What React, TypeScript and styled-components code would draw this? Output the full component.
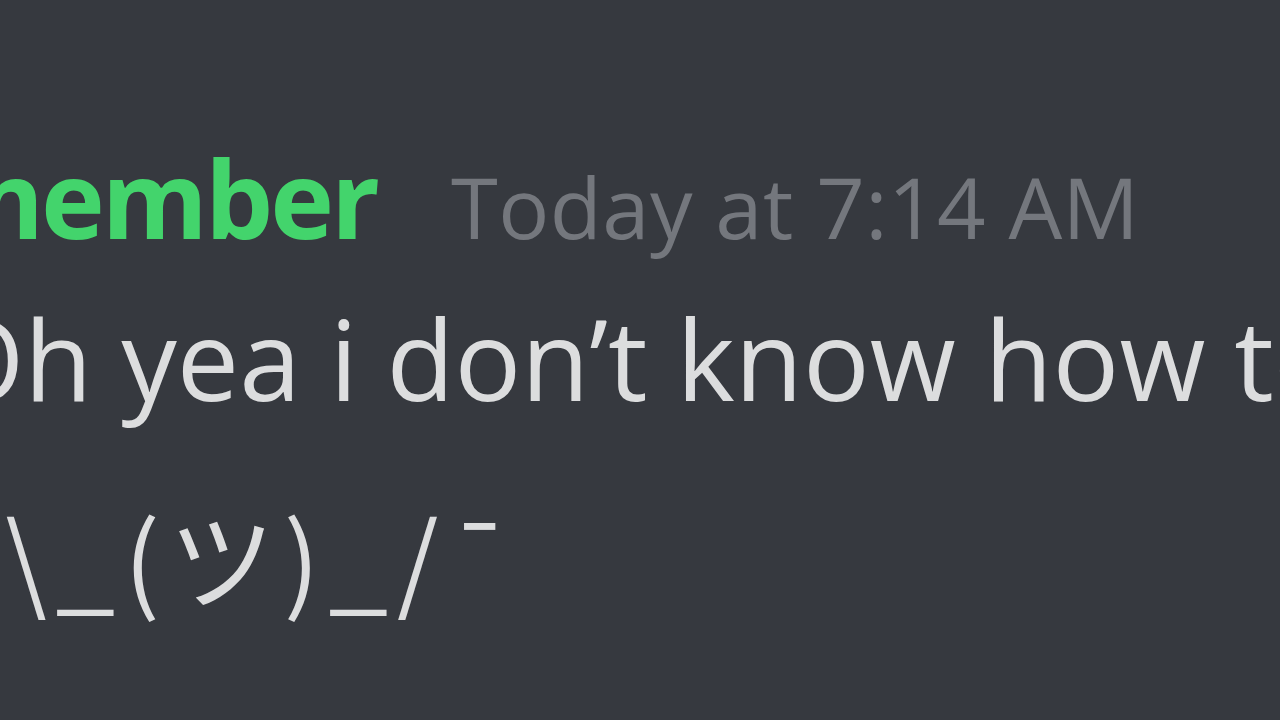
import React from "react";
import styled, { createGlobalStyle } from "styled-components";

const GlobalStyle = createGlobalStyle`
  html, body {
    margin: 0;
    padding: 0;
    background: #36393f;
    overflow: hidden;
  }
`;

const Viewport = styled.div`
  width: 1280px;
  height: 720px;
  overflow: hidden;
  background: #36393f;
  font-family: "Open Sans", "Noto Sans", sans-serif;
`;

const Message = styled.div`
  margin-left: -62px;
  padding-top: 118px;
  display: flex;
  flex-direction: column;
  white-space: nowrap;
`;

const Header = styled.div`
  display: flex;
  align-items: baseline;
  gap: 74px;
  height: 160px;
  line-height: 160px;
`;

const Username = styled.span`
  font-size: 108px;
  font-weight: 700;
  color: #43d46c;
  letter-spacing: -3px;
`;

const Timestamp = styled.span`
  font-size: 85px;
  font-weight: 400;
  color: #74777d;
  letter-spacing: 0.4px;
`;

const Line = styled.div`
  height: 160px;
  line-height: 160px;
  font-size: 111px;
  font-weight: 400;
  color: #dcddde;
  font-family: "Open Sans", "Noto Sans", sans-serif;
`;

const Shrug = styled.div`
  height: 234px;
  line-height: 234px;
  font-size: 106px;
  font-weight: 400;
  letter-spacing: 9px;
  margin-left: -6px;
  color: #dcddde;
  font-family: "Noto Sans CJK JP", "Open Sans", sans-serif;
`;

export default function App() {
  return (
    <>
      <GlobalStyle />
      <Viewport>
        <Message>
          <Header>
            <Username>member</Username>
            <Timestamp>Today at 7:14 AM</Timestamp>
          </Header>
          <Line>Oh yea i don’t know how to</Line>
          <Shrug>¯\_(ツ)_/¯</Shrug>
        </Message>
      </Viewport>
    </>
  );
}
